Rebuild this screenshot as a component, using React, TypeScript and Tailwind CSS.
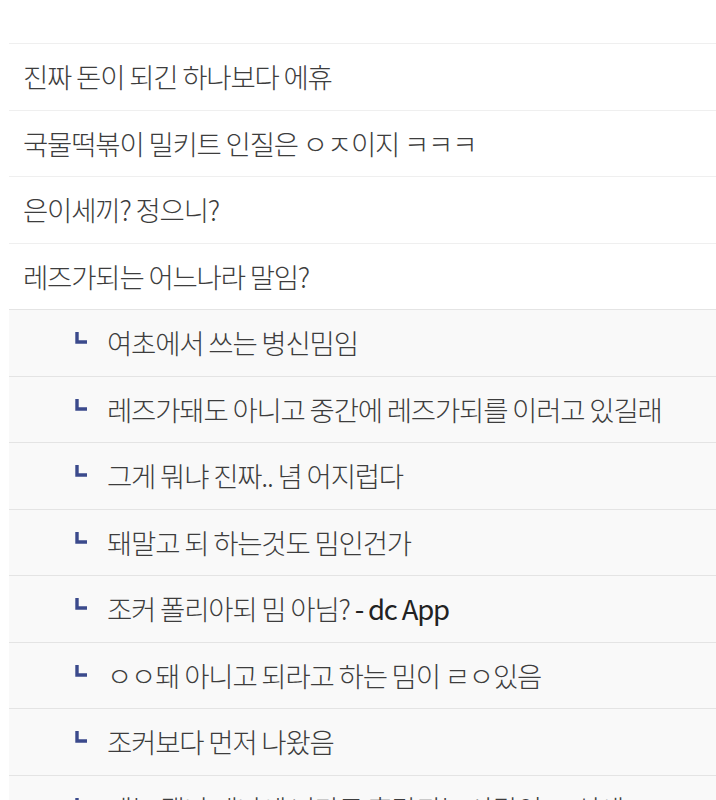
import React from 'react';

const posts = [
  '진짜 돈이 되긴 하나보다 에휴',
  '국물떡볶이 밀키트 인질은 ㅇㅈ이지 ㅋㅋㅋ',
  '은이세끼? 정으니?',
  '레즈가되는 어느나라 말임?',
];

const replies: { text: string; app?: boolean }[] = [
  { text: '여초에서 쓰는 병신밈임' },
  { text: '레즈가돼도 아니고 중간에 레즈가되를 이러고 있길래' },
  { text: '그게 뭐냐 진짜.. 념 어지럽다' },
  { text: '돼말고 되 하는것도 밈인건가' },
  { text: '조커 폴리아되 밈 아님?', app: true },
  { text: 'ㅇㅇ돼 아니고 되라고 하는 밈이 ㄹㅇ있음' },
  { text: '조커보다 먼저 나왔음' },
  { text: '레는 됐냐 돼냐에 니다로 혼란되는 사람이 ㅋ 신세' },
];

function ReplyMark() {
  return (
    <svg width="12" height="12" viewBox="0 0 12 12" className="shrink-0">
      <path d="M2 0v10h10" fill="none" stroke="#3b4a8c" strokeWidth="3.4" />
    </svg>
  );
}

export default function App() {
  return (
    <div
      className="min-h-screen bg-white text-[#3d3d3d] overflow-hidden h-[800px]"
      style={{ fontFamily: '"Noto Sans CJK KR", "Noto Sans", sans-serif' }}
    >
      <div className="h-[43px]" />
      <ul className="ml-[9px]">
        {posts.map((p, i) => (
          <li
            key={i}
            className="h-[66.5px] border-t border-[#efefef] flex items-center pl-[14px] text-[27.5px] font-light tracking-[-1.2px] whitespace-nowrap"
          >
            {p}
          </li>
        ))}
        {replies.map((r, i) => (
          <li
            key={i}
            className="h-[66.5px] border-t border-[#e4e4e4] bg-[#f9f9f9] flex items-center pl-[66px] text-[27.5px] font-light tracking-[-1.2px] whitespace-nowrap"
          >
            <span className="-mt-[9px]">
              <ReplyMark />
            </span>
            <span className="ml-[20px]">
              {r.text}
              {r.app && <span className="text-[#222] font-normal"> - dc App</span>}
            </span>
          </li>
        ))}
      </ul>
    </div>
  );
}
